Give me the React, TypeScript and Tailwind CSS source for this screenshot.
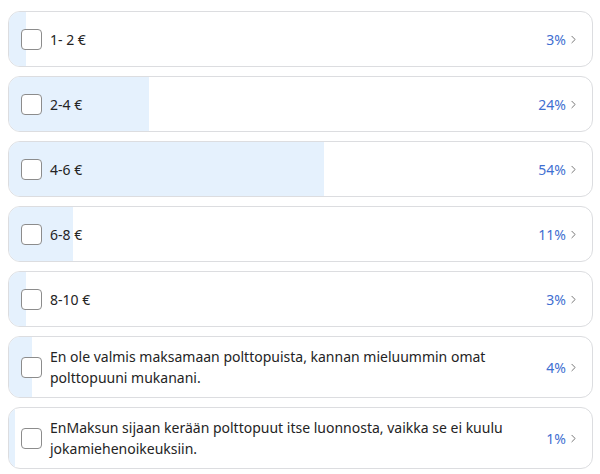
import { ChevronRight } from "lucide-react"

const options = [
  { label: "1- 2 €", pct: 3 },
  { label: "2-4 €", pct: 24 },
  { label: "4-6 €", pct: 54 },
  { label: "6-8 €", pct: 11 },
  { label: "8-10 €", pct: 3 },
  { label: "En ole valmis maksamaan polttopuista, kannan mieluummin omat polttopuuni mukanani.", pct: 4 },
  { label: "EnMaksun sijaan kerään polttopuut itse luonnosta, vaikka se ei kuulu jokamiehenoikeuksiin.", pct: 1 },
]

function OptionRow({ label, pct }: { label: string; pct: number }) {
  return (
    <div className="relative overflow-hidden rounded-[12px] border border-[#dcdde0] bg-white">
      {/* result bar */}
      <div className="absolute inset-y-0 left-0 bg-[#e5f1fd]" style={{ width: `${pct}%` }} />
      <div className="relative flex min-h-[54px] items-center py-[9px] pl-[12px] pr-[12px]">
        <span className="h-[21px] w-[21px] shrink-0 rounded-[4px] border border-[#8c8c8c] bg-white" />
        <span className="ml-[8px] max-w-[462px] text-[14px] leading-[21px] text-[#242424]">{label}</span>
        <span className="ml-auto flex items-center pl-4 text-[14px] text-[#3f6fd1]">
          {pct}%
          <ChevronRight className="ml-[1px] h-[13px] w-[13px] text-[#707070]" strokeWidth={1.75} />
        </span>
      </div>
    </div>
  )
}

export default function App() {
  return (
    <div className="h-[474px] w-[600px] bg-white font-['Noto_Sans',sans-serif]">
      <div className="ml-[8px] flex w-[585px] flex-col gap-[9px] pt-[11px]">
        {options.map((o) => (
          <OptionRow key={o.label} label={o.label} pct={o.pct} />
        ))}
      </div>
    </div>
  )
}
